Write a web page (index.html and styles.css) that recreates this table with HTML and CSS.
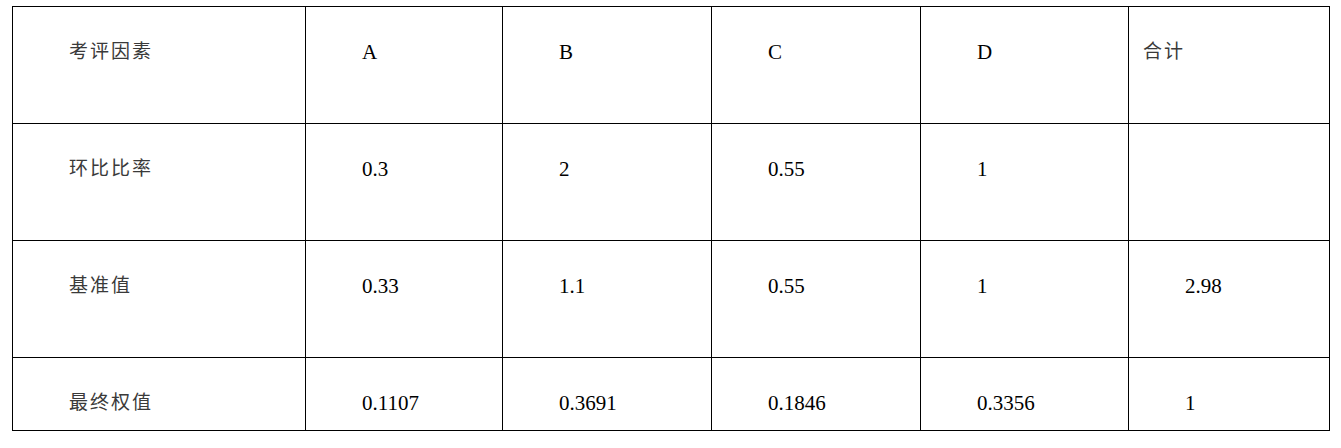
FILE: index.html
```html
<!DOCTYPE html>
<html>
<head>
    <meta charset="utf-8">
    <title>考评因素权值</title>
    <link rel="stylesheet" href="styles.css">
</head>
<body>
    <table class="weights">
        <colgroup>
            <col class="c-name">
            <col class="c-a">
            <col class="c-b">
            <col class="c-c">
            <col class="c-d">
            <col class="c-sum">
        </colgroup>
        <tr class="row-tall">
            <td class="zh">考评因素</td>
            <td>A</td>
            <td>B</td>
            <td>C</td>
            <td>D</td>
            <td class="zh sum-head">合计</td>
        </tr>
        <tr class="row-tall">
            <td class="zh">环比比率</td>
            <td>0.3</td>
            <td>2</td>
            <td>0.55</td>
            <td>1</td>
            <td></td>
        </tr>
        <tr class="row-tall">
            <td class="zh">基准值</td>
            <td>0.33</td>
            <td>1.1</td>
            <td>0.55</td>
            <td>1</td>
            <td>2.98</td>
        </tr>
        <tr class="row-short">
            <td class="zh">最终权值</td>
            <td>0.1107</td>
            <td>0.3691</td>
            <td>0.1846</td>
            <td>0.3356</td>
            <td>1</td>
        </tr>
    </table>
</body>
</html>
```

FILE: styles.css
```css
body {
    margin: 0;
    background: #fff;
    font-family: "Liberation Serif", "Times New Roman", "DejaVu Serif", serif;
    color: #000;
}

.weights {
    margin: 6px 0 0 12px;
    border-collapse: collapse;
    table-layout: fixed;
    width: 1317px;
}

.c-name { width: 293px; }
.c-a { width: 197px; }
.c-b { width: 209px; }
.c-c { width: 209px; }
.c-d { width: 208px; }
.c-sum { width: 201px; }

.weights td {
    border: 1px solid #000;
    vertical-align: top;
    padding: 33px 0 0 56px;
    font-family: "Liberation Serif", "Times New Roman", serif;
    font-size: 21px;
    line-height: 24px;
    white-space: nowrap;
}

.row-tall td {
    height: 117px;
    box-sizing: border-box;
}

.row-short td {
    height: 73px;
    box-sizing: border-box;
}

.weights td.zh {
    font-family: "Noto Sans CJK SC", sans-serif;
    font-size: 19px;
    letter-spacing: 2px;
    color: #3a3a3a;
    padding-top: 31px;
}

.weights td.sum-head {
    padding-left: 14px;
}
```
